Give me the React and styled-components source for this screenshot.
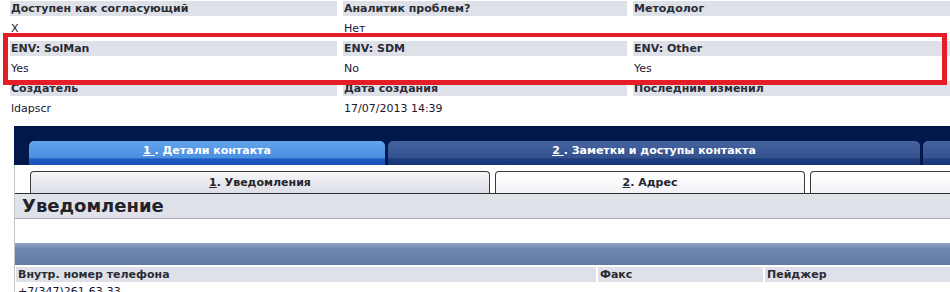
import React from 'react'
import styled, { createGlobalStyle } from 'styled-components'

const GlobalStyle = createGlobalStyle`
  html, body {
    margin: 0;
    padding: 0;
    background: #ffffff;
    font-family: "DejaVu Sans", Verdana, sans-serif;
    overflow: hidden;
  }
`

const Page = styled.div`
  position: relative;
  width: 950px;
  height: 292px;
  overflow: hidden;
`

const DetailGrid = styled.div`
  display: grid;
  grid-template-columns: 327px 284px 1fr;
  column-gap: 6px;
  padding: 1px 0 0 10px;
`

const Field = styled.div`
  display: flex;
  flex-direction: column;
`

const Label = styled.div`
  height: 15px;
  line-height: 15px;
  padding-left: 1px;
  background: #dfe1e9;
  color: #2b2b33;
  font-size: 11px;
  font-weight: bold;
  white-space: nowrap;
  overflow: hidden;
`

const Value = styled.div`
  height: 25px;
  box-sizing: border-box;
  padding: 6px 0 0 1px;
  line-height: 14px;
  color: #1a1530;
  font-size: 11px;
  white-space: nowrap;
`

const Highlight = styled.div`
  position: absolute;
  top: 33px;
  left: 3px;
  width: 944px;
  height: 52px;
  box-sizing: border-box;
  border: 5px solid #e41d27;
  border-top-width: 4px;
  pointer-events: none;
`

const Workspace = styled.div`
  margin: 5px 0 0 14px;
`

const TabBar = styled.div`
  display: flex;
  gap: 3px;
  padding: 15px 0 0 15px;
  background: #00184a;
  white-space: nowrap;
`

const MainTab = styled.div`
  flex: 0 0 ${p => p.$width}px;
  height: 24px;
  box-sizing: border-box;
  border-radius: 5px 5px 0 0;
  padding-bottom: 5px;
  display: flex;
  align-items: center;
  justify-content: center;
  color: #ffffff;
  font-size: 11px;
  font-weight: bold;
  background: ${p => p.$active
    ? 'linear-gradient(#62a4ea, #4b8fe0 70%, #1c58c2 75%, #1a52b8)'
    : 'linear-gradient(#4663a0, #34528f 70%, #1c3b7d 75%, #1a387a)'};

  u { text-decoration-thickness: 1px; }
`

const Content = styled.div`
  border-left: 1px solid #c4c6cf;
`

const SubTabRow = styled.div`
  display: flex;
  gap: 5px;
  padding: 6px 0 0 15px;
  border-bottom: 1px solid #2e2e2e;
  white-space: nowrap;
`

const SubTab = styled.div`
  flex: 0 0 ${p => p.$width}px;
  height: 22px;
  box-sizing: border-box;
  border: 1px solid #3a3a3a;
  border-bottom: 0;
  border-radius: 4px 4px 0 0;
  display: flex;
  align-items: center;
  justify-content: center;
  color: #26262e;
  font-size: 11px;
  font-weight: bold;
  background: ${p => p.$active
    ? 'linear-gradient(#f6f6f8, #dcdee6)'
    : 'linear-gradient(#ffffff, #f2f3f6)'};
`

const SectionTitle = styled.div`
  height: 25px;
  box-sizing: border-box;
  padding-left: 7px;
  line-height: 24px;
  background: #e0e2ea;
  border-bottom: 1px solid #a7abbc;
  color: #222228;
  font-size: 18px;
  font-weight: bold;
`

const Spacer = styled.div`
  height: 24px;
`

const BlueBand = styled.div`
  height: 22px;
  background: linear-gradient(#93a3c1, #7189b0 25%, #5f7aa4);
`

const PhoneGrid = styled.div`
  display: grid;
  grid-template-columns: 580px 165px 1fr;
  column-gap: 2px;
  padding: 2px 0 0 1px;
`

const PhoneLabel = styled(Label)`
  padding-left: 2px;
`

const PhoneValue = styled(Value)`
  padding: 3px 0 0 2px;
`

const fields = [
  ['Доступен как согласующий', 'X'],
  ['Аналитик проблем?', 'Нет'],
  ['Методолог', ''],
  ['ENV: SolMan', 'Yes'],
  ['ENV: SDM', 'No'],
  ['ENV: Other', 'Yes'],
  ['Создатель', 'ldapscr'],
  ['Дата создания', '17/07/2013 14:39'],
  ['Последним изменил', ''],
]

const phones = [
  ['Внутр. номер телефона', '+7(347)261-63-33'],
  ['Факс', ''],
  ['Пейджер', ''],
]

export default function App() {
  return (
    <Page>
      <GlobalStyle />
      <DetailGrid>
        {fields.map(([label, value]) => (
          <Field key={label}>
            <Label>{label}</Label>
            <Value>{value}</Value>
          </Field>
        ))}
      </DetailGrid>
      <Highlight />

      <Workspace>
        <TabBar>
          <MainTab $active $width={356}><span><u>1 </u>. Детали контакта</span></MainTab>
          <MainTab $width={532}><span><u>2 </u>. Заметки и доступы контакта</span></MainTab>
          <MainTab $width={200} />
        </TabBar>
        <Content>
          <SubTabRow>
            <SubTab $active $width={460}><span><u>1</u>. Уведомления</span></SubTab>
            <SubTab $width={310}><span><u>2</u>. Адрес</span></SubTab>
            <SubTab $width={200} />
          </SubTabRow>
          <SectionTitle>Уведомление</SectionTitle>
          <Spacer />
          <BlueBand />
          <PhoneGrid>
            {phones.map(([label, value]) => (
              <Field key={label}>
                <PhoneLabel>{label}</PhoneLabel>
                <PhoneValue>{value}</PhoneValue>
              </Field>
            ))}
          </PhoneGrid>
        </Content>
      </Workspace>
    </Page>
  )
}
